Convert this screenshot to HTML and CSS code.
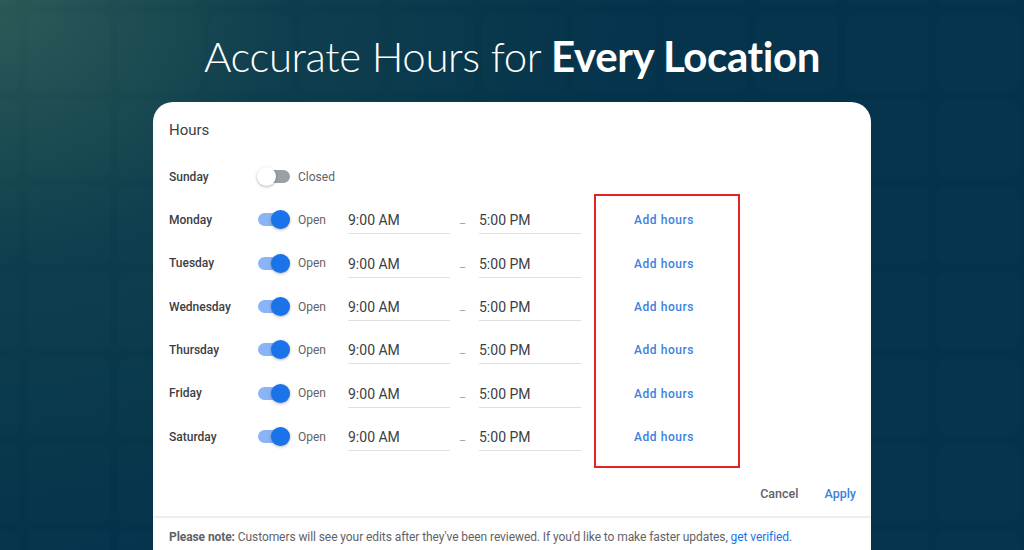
FILE: index.html
```html
<!DOCTYPE html>
<html>
<head>
<meta charset="utf-8">
<link rel="stylesheet" href="styles.css">
</head>
<body>
<div class="tiles" aria-hidden="true">
  <i></i><i></i><i></i><i></i><i></i><i></i><i></i><i></i><i></i><i></i><i></i><i></i>
  <i></i><i></i><i></i><i></i><i></i><i></i><i></i><i></i><i></i><i></i><i></i><i></i>
  <i></i><i></i><i></i><i></i><i></i><i></i><i></i><i></i><i></i><i></i><i></i><i></i>
  <i></i><i></i><i></i><i></i><i></i><i></i><i></i><i></i><i></i><i></i><i></i><i></i>
  <i></i><i></i><i></i><i></i><i></i><i></i><i></i><i></i><i></i><i></i><i></i><i></i>
  <i></i><i></i><i></i><i></i><i></i><i></i><i></i><i></i><i></i><i></i><i></i><i></i>
  <i></i><i></i><i></i><i></i><i></i><i></i><i></i><i></i><i></i><i></i><i></i><i></i>
  <i></i><i></i><i></i><i></i><i></i><i></i><i></i><i></i><i></i><i></i><i></i><i></i>
</div>
<main class="page">
  <h1 class="title"><span class="light">Accurate Hours for</span> <span class="bold">Every Location</span></h1>
  <section class="card">
    <div class="card-head">Hours</div>
    <div class="hours-body">
      <div class="hours">
        <div class="day">Sunday</div>
        <div class="toggle off"><span class="thumb"></span></div>
        <div class="status">Closed</div>

        <div class="day">Monday</div>
        <div class="toggle on"><span class="thumb"></span></div>
        <div class="status">Open</div>
        <div class="field">9:00 AM</div><div class="dash">–</div><div class="field">5:00 PM</div>

        <div class="day">Tuesday</div>
        <div class="toggle on"><span class="thumb"></span></div>
        <div class="status">Open</div>
        <div class="field">9:00 AM</div><div class="dash">–</div><div class="field">5:00 PM</div>

        <div class="day">Wednesday</div>
        <div class="toggle on"><span class="thumb"></span></div>
        <div class="status">Open</div>
        <div class="field">9:00 AM</div><div class="dash">–</div><div class="field">5:00 PM</div>

        <div class="day">Thursday</div>
        <div class="toggle on"><span class="thumb"></span></div>
        <div class="status">Open</div>
        <div class="field">9:00 AM</div><div class="dash">–</div><div class="field">5:00 PM</div>

        <div class="day">Friday</div>
        <div class="toggle on"><span class="thumb"></span></div>
        <div class="status">Open</div>
        <div class="field">9:00 AM</div><div class="dash">–</div><div class="field">5:00 PM</div>

        <div class="day">Saturday</div>
        <div class="toggle on"><span class="thumb"></span></div>
        <div class="status">Open</div>
        <div class="field">9:00 AM</div><div class="dash">–</div><div class="field">5:00 PM</div>
      </div>
      <div class="add-col">
        <div class="highlight">
          <a class="add">Add hours</a>
          <a class="add">Add hours</a>
          <a class="add">Add hours</a>
          <a class="add">Add hours</a>
          <a class="add">Add hours</a>
          <a class="add">Add hours</a>
        </div>
      </div>
    </div>
    <div class="actions">
      <a class="btn cancel">Cancel</a>
      <a class="btn apply">Apply</a>
    </div>
    <div class="note"><b>Please note:</b> Customers will see your edits after they've been reviewed. If you'd like to make faster updates, <a class="link">get verified</a>.</div>
  </section>
</main>
</body>
</html>
```

FILE: styles.css
```css
* { box-sizing: border-box; }
html, body { margin: 0; height: 100%; }
body {
  width: 1024px;
  height: 550px;
  overflow: hidden;
  position: relative;
  background:
    radial-gradient(ellipse 620px 560px at 0 0, rgba(48, 96, 88, 0.85) 0%, rgba(22, 70, 78, 0.55) 45%, rgba(3, 50, 73, 0) 100%),
    #03324a;
  font-family: Roboto, "Liberation Sans", Arial, sans-serif;
}
.tiles {
  position: absolute;
  left: -64px;
  top: -72px;
  display: grid;
  grid-template-columns: repeat(12, 83px);
  grid-auto-rows: 78px;
  gap: 8px;
  z-index: 0;
}
.tiles i {
  display: block;
  border-radius: 9px;
  background: rgba(255, 255, 255, 0.012);
}
.page {
  position: relative;
  z-index: 1;
  display: flex;
  flex-direction: column;
  align-items: center;
}
.title {
  margin: 0;
  height: 102px;
  padding-top: 31px;
  font-family: Lato, "Open Sans", sans-serif;
  font-size: 42px;
  line-height: 50px;
  color: #ffffff;
  letter-spacing: -0.4px;
  flex-shrink: 0;
}
.title .light { font-weight: 300; }
.title .bold { font-weight: 700; }
.card {
  width: 718px;
  height: 460px;
  background: #ffffff;
  border-radius: 20px 20px 0 0;
  display: flex;
  flex-direction: column;
  flex-shrink: 0;
}
.card > * { flex-shrink: 0; }
.card-head {
  padding: 19px 16px 0 16px;
  height: 53px;
  font-size: 15px;
  line-height: 18px;
  color: #3c4043;
}
.hours-body {
  display: flex;
  padding-left: 16px;
}
.hours {
  display: grid;
  grid-template-columns: 89px 32px 58px 102px 29px 102px;
  grid-auto-rows: 43.33px;
  align-items: center;
}
.day {
  grid-column: 1;
  font-size: 12px;
  font-weight: 500;
  color: #3c4043;
}
.toggle {
  position: relative;
  width: 32px;
  height: 13px;
  border-radius: 7px;
}
.toggle.on { background: #8ab4f8; }
.toggle.off { background: #9aa0a6; }
.thumb {
  position: absolute;
  top: -3px;
  width: 19px;
  height: 19px;
  border-radius: 50%;
  box-shadow: 0 1px 3px rgba(0, 0, 0, 0.3);
}
.toggle.on .thumb { right: 0; background: #1a73e8; }
.toggle.off .thumb { left: -1px; background: #ffffff; }
.status {
  padding-left: 8px;
  font-size: 12px;
  color: #5f6368;
}
.field {
  align-self: stretch;
  display: flex;
  align-items: center;
  margin-top: 8px;
  height: 28px;
  border-bottom: 1px solid #e0e0e0;
  padding-top: 1px;
  font-size: 14px;
  color: #3c4043;
}
.dash {
  text-align: left;
  padding-left: 9px;
  font-size: 11px;
  color: #9aa0a6;
  padding-top: 8px;
}
.add-col {
  width: 146px;
  margin-left: 13px;
  padding-top: 39.33px;
}
.highlight {
  border: 2px solid #e02424;
  padding: 2px 0 8px 0;
  display: flex;
  flex-direction: column;
}
.add {
  height: 43.33px;
  display: flex;
  align-items: center;
  justify-content: center;
  padding-right: 6px;
  padding-top: 1px;
  font-size: 12px;
  font-weight: 500;
  color: #3b82e0;
  letter-spacing: 0.55px;
}
.actions {
  display: flex;
  justify-content: flex-end;
  align-items: center;
  gap: 26px;
  height: 50px;
  padding: 2px 15px 0 0;
  border-bottom: 2px solid #eceef0;
}
.btn {
  font-size: 12.5px;
  font-weight: 500;
}
.cancel { color: #5f6368; }
.apply { color: #3b82e0; }
.note {
  padding: 12px 16px 0 16px;
  font-size: 12px;
  letter-spacing: -0.08px;
  color: #5f6368;
}
.note b { font-weight: 700; color: #5f6368; }
.link { color: #1a73e8; }
```
